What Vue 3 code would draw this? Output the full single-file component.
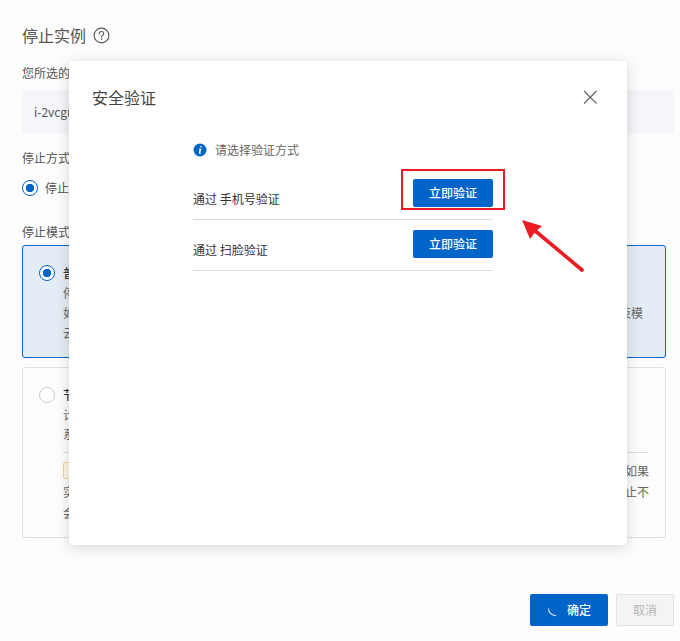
<script setup>
</script>

<template>
  <div class="page">
    <header class="heading">
      <h1>停止实例</h1>
      <svg class="help" width="17" height="17" viewBox="0 0 17 17" fill="none" stroke="#555" stroke-width="1.1">
        <circle cx="8.5" cy="8.5" r="7.4" />
        <path d="M6.2 6.7c0-1.4 1-2.2 2.3-2.2s2.3.8 2.3 2c0 1.9-2.3 1.8-2.3 3.7" stroke-linecap="round" />
        <path d="M8.5 11.6v1.3" stroke-width="1.3" />
      </svg>
    </header>

    <p class="label first">您所选的</p>
    <div class="instance">i-2vcgu8</div>

    <p class="label method">停止方式</p>
    <div class="method-row"><span class="radio checked"></span><span>停止</span></div>

    <p class="label mode">停止模式</p>
    <section class="card card-on">
      <span class="radio checked"></span>
      <div class="body">
        <div class="line strong">普通停止</div>
        <div class="line l2">停止后实例将进入已停止状态</div>
        <div class="line l2 split"><span>如需更改实例规格请先停止实例</span><span>束模</span></div>
        <div class="line l2">云盘数据不受影响</div>
      </div>
    </section>
    <section class="card card-off">
      <span class="radio"></span>
      <div class="body">
        <div class="line strong">节省停机模式</div>
        <div class="line l2">计算资源不再保留</div>
        <div class="line l2">系统盘与数据盘继续收费</div>
        <div class="rule"></div>
        <div class="line split tagline"><span class="tag"></span><span>如果</span></div>
        <div class="line l2 split l3"><span>实例停止后资源可能被回收</span><span>止不</span></div>
        <div class="line l2">会再次启动</div>
      </div>
    </section>

    <footer class="actions">
      <button class="btn primary">
        <svg class="spin" width="12" height="12" viewBox="0 0 12 12" fill="none" stroke="#cfe0f3" stroke-width="1.2">
          <path d="M1.5 2.5c.2 4 2.6 6.6 7.5 7.2" />
        </svg>
        确定
      </button>
      <button class="btn disabled">取消</button>
    </footer>

    <div class="modal">
      <div class="modal-head">
        <h2>安全验证</h2>
        <svg width="16" height="16" viewBox="0 0 16 16" stroke="#666" stroke-width="1.2" fill="none">
          <path d="M2 2l12.5 12.5M14.5 2L2 14.5" />
        </svg>
      </div>
      <div class="verify">
        <div class="hint">
          <svg width="14" height="14" viewBox="0 0 14 14">
            <circle cx="7" cy="7" r="6.5" fill="#0064c8" />
            <path d="M7.4 3h1.5l-.3 1.3H7.1zM6.7 5.6h1.6L7.4 9.9c-.1.3.2.3.7 0l.1.6c-1 .6-2.5.8-2.3-.4l.6-3.6c-.2 0-.5 0-.6.1l.1-.6z" fill="#fff" />
          </svg>
          <span>请选择验证方式</span>
        </div>
        <div class="verify-row">
          <span>通过 手机号验证</span>
          <button class="btn verify-btn">立即验证</button>
        </div>
        <div class="verify-row">
          <span>通过 扫脸验证</span>
          <button class="btn verify-btn">立即验证</button>
        </div>
      </div>
    </div>

    <div class="mark"></div>
    <svg class="arrow" width="64" height="54" viewBox="0 0 64 54" fill="none">
      <path d="M60 50L11 9" stroke="#ed1c24" stroke-width="3.6" stroke-linecap="round" />
      <path d="M0 0l20 6-6 5-6 8z" fill="#ed1c24" />
    </svg>
  </div>
</template>

<style scoped>
.page {
  position: relative;
  width: 680px;
  height: 641px;
  overflow: hidden;
  box-sizing: border-box;
  padding: 26px 6px 0 22px;
  background: #fdfdfd;
  color: #555;
  font: 12px/18px "Noto Sans CJK SC", "Noto Sans", sans-serif;
}
.heading { display: flex; align-items: center; gap: 7px; height: 18px; }
h1, h2 { margin: 0; font-weight: 400; font-size: 16px; line-height: 18px; }
h1 { color: #555; }
.label { margin: 0; line-height: 16px; }
.label.first { margin-top: 21px; }
.instance {
  margin-top: 9px;
  height: 43px;
  line-height: 43px;
  padding-left: 12px;
  background: #f4f6f9;
}
.label.method { margin-top: 17px; }
.method-row { display: flex; align-items: center; gap: 7px; margin-top: 12px; height: 20px; }
.label.mode { margin-top: 26px; }
.radio {
  flex: none;
  box-sizing: border-box;
  width: 16px;
  height: 16px;
  border: 1px solid #ccc;
  border-radius: 50%;
  background: #fff;
}
.radio.checked {
  border-color: #0064c8;
  background: radial-gradient(circle, #0064c8 0 3.9px, #fff 4.5px);
}
.card {
  display: flex;
  gap: 8px;
  box-sizing: border-box;
  width: 644px;
  padding: 19px 16px 0 16px;
  border: 1px solid #e0e0e0;
  border-radius: 3px;
}
.card-on {
  margin-top: 5px;
  height: 113px;
  background: #e4ecf5;
  border-color: #0064c8;
}
.card-off {
  margin-top: 9px;
  height: 171px;
}
.body { flex: 1; min-width: 0; }
.line { line-height: 20px; height: 20px; white-space: nowrap; }
.l2 { color: #666; }
.card-off .l2 { height: 19px; }
.strong { color: #333; font-weight: 500; margin-top: -2px; }
.split { display: flex; justify-content: space-between; }
.card-on .split { padding-right: 6px; }
.rule { height: 1px; margin: 9px 0 9px; background: #e0e0e0; }
.tagline { align-items: flex-start; height: 20px; color: #666; line-height: 18px; }
.tag {
  display: block;
  width: 40px;
  height: 17px;
  box-sizing: border-box;
  border: 1px solid #f0d98a;
  border-radius: 2px;
  background: #fdf8e6;
}
.card-off .l3 { height: 21px; }
.actions {
  position: absolute;
  right: 6px;
  bottom: 15px;
  display: flex;
  gap: 8px;
}
.btn {
  box-sizing: border-box;
  height: 32px;
  border: 0;
  border-radius: 2px;
  padding: 0;
  font: inherit;
}
.primary {
  display: flex;
  align-items: center;
  justify-content: center;
  gap: 8px;
  width: 78px;
  background: #0064c8;
  color: #fff;
  font-weight: 500;
}
.spin { margin: 4px 0 0 0; }
.disabled {
  width: 58px;
  background: #f4f4f4;
  border: 1px solid #e3e3e3;
  color: #b5b5b5;
}
.modal {
  position: absolute;
  left: 69px;
  top: 61px;
  width: 558px;
  height: 484px;
  box-sizing: border-box;
  padding: 27px 29px 0 23px;
  background: #fff;
  border-radius: 4px;
  box-shadow: 0 2px 14px rgba(0, 0, 0, 0.17);
  color: #333;
}
.modal-head { display: flex; justify-content: space-between; align-items: center; }
h2 { color: #444; }
.verify { width: 300px; margin: 35px 0 0 101px; }
.hint { display: flex; align-items: center; gap: 8px; height: 18px; color: #666; }
.verify-row {
  display: flex;
  justify-content: space-between;
  box-sizing: border-box;
  height: 51px;
  border-bottom: 1px solid #ddd;
  align-items: flex-end;
  padding-bottom: 11px;
}
.hint + .verify-row { height: 61px; }
.verify-btn {
  width: 80px;
  height: 28px;
  margin-bottom: 1px;
  background: #0064c8;
  color: #fff;
  font-weight: 500;
  border-radius: 2px;
}
.mark {
  position: absolute;
  left: 401px;
  top: 169px;
  width: 104px;
  height: 41px;
  box-sizing: border-box;
  border: 2px solid #ed1c24;
}
.arrow { position: absolute; left: 522px; top: 220px; }
</style>
